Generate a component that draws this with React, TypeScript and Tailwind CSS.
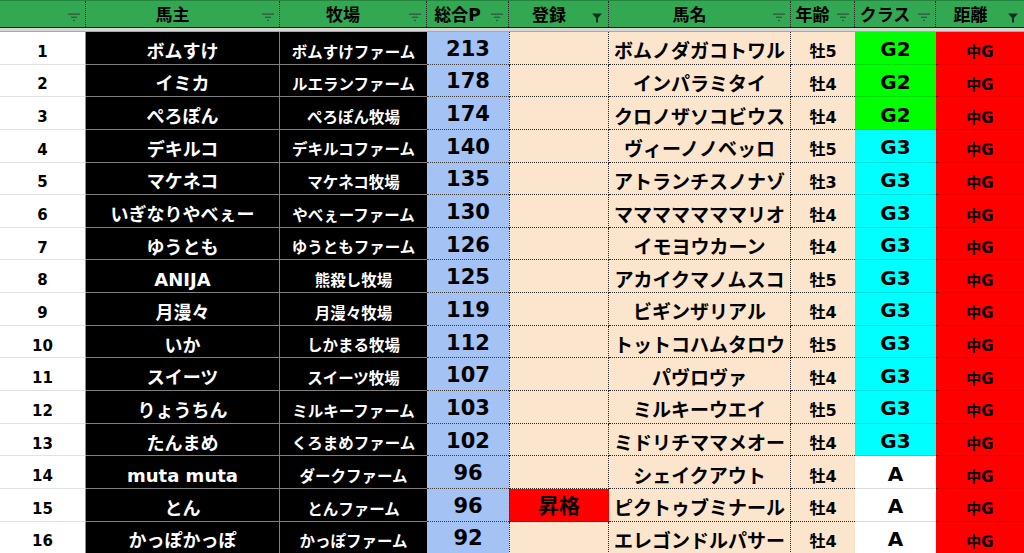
import React from "react";

type Row = {
  n: number;
  owner: string;
  farm: string;
  p: number;
  reg: string;
  horse: string;
  age: string;
  cls: "G2" | "G3" | "A";
};

const rows: Row[] = [
  { n: 1, owner: "ボムすけ", farm: "ボムすけファーム", p: 213, reg: "", horse: "ボムノダガコトワル", age: "牡5", cls: "G2" },
  { n: 2, owner: "イミカ", farm: "ルエランファーム", p: 178, reg: "", horse: "インパラミタイ", age: "牡4", cls: "G2" },
  { n: 3, owner: "ぺろぽん", farm: "ぺろぽん牧場", p: 174, reg: "", horse: "クロノザソコビウス", age: "牡4", cls: "G2" },
  { n: 4, owner: "デキルコ", farm: "デキルコファーム", p: 140, reg: "", horse: "ヴィーノノベッロ", age: "牡5", cls: "G3" },
  { n: 5, owner: "マケネコ", farm: "マケネコ牧場", p: 135, reg: "", horse: "アトランチスノナゾ", age: "牡3", cls: "G3" },
  { n: 6, owner: "いぎなりやべぇー", farm: "やべぇーファーム", p: 130, reg: "", horse: "マママママママリオ", age: "牡4", cls: "G3" },
  { n: 7, owner: "ゆうとも", farm: "ゆうともファーム", p: 126, reg: "", horse: "イモヨウカーン", age: "牡4", cls: "G3" },
  { n: 8, owner: "ANIJA", farm: "熊殺し牧場", p: 125, reg: "", horse: "アカイクマノムスコ", age: "牡5", cls: "G3" },
  { n: 9, owner: "月漫々", farm: "月漫々牧場", p: 119, reg: "", horse: "ビギンザリアル", age: "牡4", cls: "G3" },
  { n: 10, owner: "いか", farm: "しかまる牧場", p: 112, reg: "", horse: "トットコハムタロウ", age: "牡5", cls: "G3" },
  { n: 11, owner: "スイーツ", farm: "スイーツ牧場", p: 107, reg: "", horse: "パヴロヴァ", age: "牡4", cls: "G3" },
  { n: 12, owner: "りょうちん", farm: "ミルキーファーム", p: 103, reg: "", horse: "ミルキーウエイ", age: "牡5", cls: "G3" },
  { n: 13, owner: "たんまめ", farm: "くろまめファーム", p: 102, reg: "", horse: "ミドリチママメオー", age: "牡4", cls: "G3" },
  { n: 14, owner: "muta muta", farm: "ダークファーム", p: 96, reg: "", horse: "シェイクアウト", age: "牡4", cls: "A" },
  { n: 15, owner: "とん", farm: "とんファーム", p: 96, reg: "昇格", horse: "ピクトゥブミナール", age: "牡4", cls: "A" },
  { n: 16, owner: "かっぽかっぽ", farm: "かっぽファーム", p: 92, reg: "", horse: "エレゴンドルパサー", age: "牡4", cls: "A" },
];

const clsStyle: Record<Row["cls"], string> = {
  G2: "bg-[#00ff00] border-b border-[#00dd00]",
  G3: "bg-[#00ffff] border-b border-[#00dede]",
  A: "bg-white border-b border-[#dcdcdc]",
};

const GRID =
  "grid grid-cols-[86px_194px_147px_82px_100px_182px_64px_81px_88px]";

function SortIcon() {
  return (
    <svg width="12" height="9" viewBox="0 0 12 9" className="shrink-0 mt-[7px] mr-[5px]">
      <rect x="0" y="0.5" width="12" height="1.3" fill="#355640" />
      <rect x="3" y="3.6" width="6" height="1.3" fill="#355640" />
      <rect x="5" y="6.8" width="2" height="1.3" fill="#355640" />
    </svg>
  );
}

function FunnelIcon() {
  return (
    <svg width="10" height="10" viewBox="0 0 10 10" className="shrink-0 mt-[7px] mr-[6px]">
      <path d="M0 0.5 H10 L6 5 V9.5 H4 V5 Z" fill="#17301f" />
    </svg>
  );
}

function HeaderCell({ label, filtered, last }: { label: string; filtered?: boolean; last?: boolean }) {
  return (
    <div
      className={
        "flex items-center h-full " +
        (last ? "" : "border-r border-dotted border-[#1d2b20]")
      }
    >
      <span className="flex-1 text-center pr-[3px] pt-[2px] text-[17px] font-bold leading-none text-black whitespace-nowrap">
        {label}
      </span>
      {filtered ? <FunnelIcon /> : <SortIcon />}
    </div>
  );
}

export default function App() {
  return (
    <div className="w-[1024px] h-[553px] overflow-hidden bg-white font-['DejaVu_Sans','Noto_Sans_CJK_JP',sans-serif]">
      {/* header */}
      <div className={GRID + " h-[28px] bg-[#33a852] border-t border-[#22843d] border-b border-b-[#1c1c1c]"}>
        <HeaderCell label="" />
        <HeaderCell label="馬主" />
        <HeaderCell label="牧場" />
        <HeaderCell label="総合P" />
        <HeaderCell label="登録" filtered />
        <HeaderCell label="馬名" />
        <HeaderCell label="年齢" />
        <HeaderCell label="クラス" />
        <HeaderCell label="距離" filtered last />
      </div>
      <div className="h-[4px] bg-[#d6d6d6] border-b border-[#a8a8a8]" />

      {/* rows */}
      {rows.map((r) => (
        <div key={r.n} className={GRID + " h-[32.65px]"}>
          <div className="flex items-center justify-center bg-white border-b border-[#e2e2e2] border-r border-r-[#8c8c8c] pt-[9px] text-[15px] font-bold leading-none text-black">
            {r.n}
          </div>
          <div className="flex items-center justify-center bg-black border-b border-[#7f7f7f] border-r border-r-[#7f7f7f] pt-[8px] text-[18px] font-bold leading-none text-white whitespace-nowrap">
            {r.owner}
          </div>
          <div className="flex items-center justify-center bg-black border-b border-[#7f7f7f] pt-[11px] text-[15.5px] font-bold leading-none text-white whitespace-nowrap">
            {r.farm}
          </div>
          <div className="flex items-center justify-center bg-[#a4c2f4] border-b border-dotted border-[#3a3a3a] pt-[3px] text-[21px] font-bold leading-none text-black">
            {r.p}
          </div>
          <div
            className={
              "flex items-center justify-center border-b border-dotted border-[#2a2a2a] border-l border-r pt-[4px] text-[21px] font-bold leading-none text-black " +
              (r.reg ? "bg-[#ff0000]" : "bg-[#fce5cd]")
            }
          >
            {r.reg}
          </div>
          <div className="flex items-center justify-center bg-[#fce5cd] border-b border-r border-dotted border-[#2a2a2a] pt-[8px] text-[19px] font-bold leading-none text-black whitespace-nowrap">
            {r.horse}
          </div>
          <div className="flex items-center justify-center bg-[#fce5cd] border-b border-dotted border-[#2a2a2a] pt-[9px] text-[16px] font-bold leading-none text-black">
            {r.age}
          </div>
          <div
            className={
              "flex items-center justify-center pt-[3px] text-[20px] font-bold leading-none text-black " +
              clsStyle[r.cls]
            }
          >
            {r.cls}
          </div>
          <div className="flex items-center justify-center bg-[#ff0000] border-b border-dotted border-[#2a2a2a] pt-[10px] text-[15px] font-bold leading-none text-black">
            中G
          </div>
        </div>
      ))}
    </div>
  );
}
